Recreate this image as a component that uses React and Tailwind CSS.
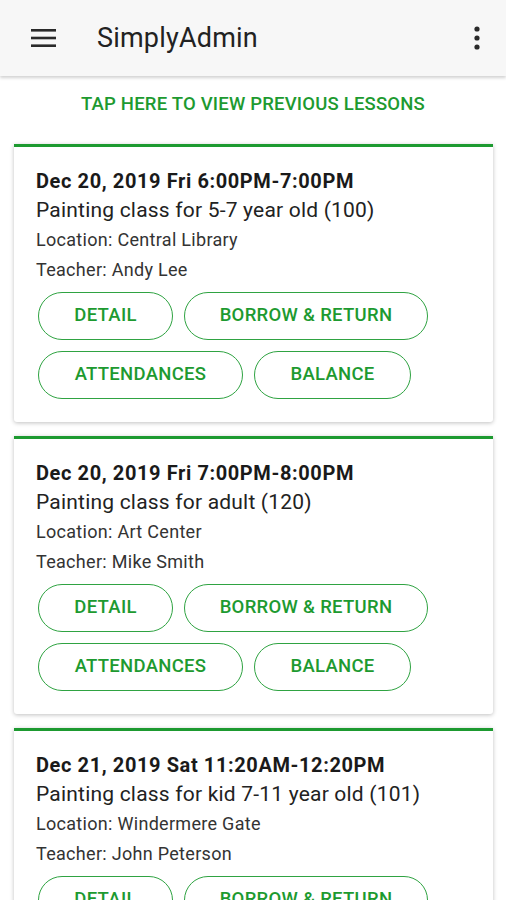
import React from 'react'

const lessons = [
  {
    date: 'Dec 20, 2019 Fri 6:00PM-7:00PM',
    title: 'Painting class for 5-7 year old (100)',
    location: 'Central Library',
    teacher: 'Andy Lee',
  },
  {
    date: 'Dec 20, 2019 Fri 7:00PM-8:00PM',
    title: 'Painting class for adult (120)',
    location: 'Art Center',
    teacher: 'Mike Smith',
  },
  {
    date: 'Dec 21, 2019 Sat 11:20AM-12:20PM',
    title: 'Painting class for kid 7-11 year old (101)',
    location: 'Windermere Gate',
    teacher: 'John Peterson',
  },
]

const PillButton = ({ label, className }) => (
  <button
    className={`h-[48px] rounded-full border border-[#2fa342] text-[18.5px] font-medium text-[#1d9a30] tracking-[0.3px] ${className}`}
  >
    {label}
  </button>
)

const LessonCard = ({ lesson }) => (
  <div className="bg-white border-t-[3px] border-[#1d9a30] rounded-b-[3px] shadow-[0_1px_4px_rgba(0,0,0,0.25)] pt-[20px] pb-[23px] px-[22px]">
    <p className="text-[20px] leading-[28px] font-bold text-[#1a1a1a] tracking-[0.6px]">{lesson.date}</p>
    <p className="text-[21px] leading-[30px] text-[#222] tracking-[0.2px]">{lesson.title}</p>
    <p className="text-[18px] leading-[29px] text-[#333] tracking-[0.3px]">Location: {lesson.location}</p>
    <p className="text-[18px] leading-[31px] text-[#333] tracking-[0.3px]">Teacher: {lesson.teacher}</p>
    <div className="mt-[7px] ml-[2px] flex flex-col gap-[11px]">
      <div className="flex gap-[11px]">
        <PillButton label="DETAIL" className="w-[135px]" />
        <PillButton label="BORROW & RETURN" className="w-[244px]" />
      </div>
      <div className="flex gap-[11px]">
        <PillButton label="ATTENDANCES" className="w-[205px]" />
        <PillButton label="BALANCE" className="w-[157px]" />
      </div>
    </div>
  </div>
)

const App = () => {
  return (
    <div className="h-[900px] overflow-hidden bg-white" style={{ fontFamily: 'Roboto, "Noto Sans", sans-serif' }}>
      {/* App bar */}
      <div className="h-[76px] bg-[#f7f7f7] shadow-[0_2px_3px_rgba(0,0,0,0.18)] flex items-center relative z-10">
        <svg width="26" height="20" viewBox="0 0 26 20" className="ml-[31px]">
          <rect x="0" y="1" width="25" height="2.6" fill="#2a2a2a" />
          <rect x="0" y="8.7" width="25" height="2.6" fill="#2a2a2a" />
          <rect x="0" y="16.4" width="25" height="2.6" fill="#2a2a2a" />
        </svg>
        <h1 className="ml-[40px] text-[27px] text-[#222] tracking-[0.2px]">SimplyAdmin</h1>
        <svg width="6" height="24" viewBox="0 0 6 24" className="ml-auto mr-[26px]">
          <circle cx="3" cy="3" r="2.6" fill="#2a2a2a" />
          <circle cx="3" cy="12" r="2.6" fill="#2a2a2a" />
          <circle cx="3" cy="21" r="2.6" fill="#2a2a2a" />
        </svg>
      </div>

      <div className="text-center pt-[16px] pb-[28px] text-[18.5px] leading-[24px] font-medium text-[#1d9a30] tracking-[0.2px]">
        TAP HERE TO VIEW PREVIOUS LESSONS
      </div>

      <div className="px-[14px] mx-auto w-[507px] flex flex-col gap-[14px]">
        {lessons.map((lesson, i) => (
          <LessonCard key={i} lesson={lesson} />
        ))}
      </div>
    </div>
  )
}

export default App
